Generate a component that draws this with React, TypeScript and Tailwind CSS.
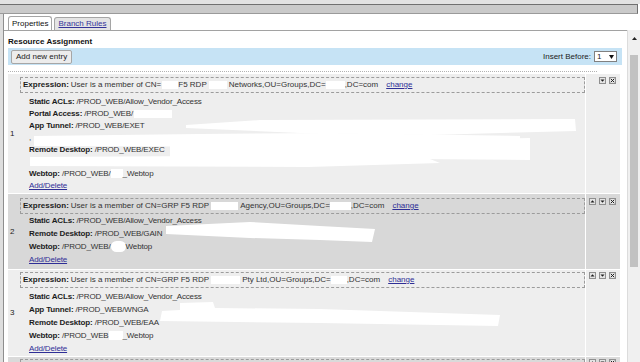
import React from "react"

type Line = { label?: string; value?: React.ReactNode; link?: string; blank?: React.ReactNode }

function Gap({ className }: { className: string }) {
  return <span className={`inline-block bg-white align-middle ${className}`} />
}

function MiniBtn({ kind }: { kind: "up" | "down" | "x" | "none" }) {
  if (kind === "none") return <span className="h-[7px] w-[7px]" />
  return (
    <span className="flex h-[7px] w-[7px] shrink-0 items-center justify-center border border-[#8f8f8f] bg-[#e4e4e4]">
      <svg width="5" height="5" viewBox="0 0 5 5">
        {kind === "up" && <path d="M0.5 3.6 L2.5 1.2 L4.5 3.6Z" fill="#1e1e1e" />}
        {kind === "down" && <path d="M0.5 1.4 L2.5 3.8 L4.5 1.4Z" fill="#1e1e1e" />}
        {kind === "x" && <path d="M0.8 0.8 L4.2 4.2 M4.2 0.8 L0.8 4.2" stroke="#1e1e1e" strokeWidth="1" />}
      </svg>
    </span>
  )
}

function Entry({
  num,
  bg,
  expr,
  lines,
  lead,
  top,
  gap,
  bottom,
  first,
  smear,
}: {
  num: string
  bg: string
  expr: React.ReactNode
  lines: Line[]
  lead: string
  top: string
  gap: string
  bottom: string
  first?: boolean
  smear?: React.ReactNode
}) {
  return (
    <div className={`relative flex shrink-0 ${bg}`}>
      <div className="flex w-[12px] items-center pl-[2px] text-[#222]">{num}</div>
      <div className={`flex-1 ${top} ${bottom}`}>
        <div className="flex h-[16px] items-center border border-dashed border-[#9c9c9c] px-[2px] text-[#333]">
          <span className="font-bold text-[#1c1c1c]">Expression:</span>
          <span className="ml-[2px]">{expr}</span>
          <a className="ml-[8px] text-[#2e2e96] underline">change</a>
        </div>
        <div className={`${gap} pl-[9px] ${lead} tracking-[-0.15px]`}>
          {lines.map((l, i) => (
            <div key={i} className="h-[1lh] whitespace-nowrap text-[#333]">
              {l.label && <span className="font-bold text-[#1c1c1c]">{l.label}: </span>}
              {l.value}
              {l.link && <a className="text-[#2e2e96] underline">{l.link}</a>}
              {l.blank}
            </div>
          ))}
        </div>
      </div>
      <div className={`flex w-[35px] gap-[3px] border-l border-white pl-[3px] ${top}`}>
        <MiniBtn kind={first ? "none" : "up"} />
        <MiniBtn kind="down" />
        <MiniBtn kind="x" />
      </div>
      {smear && (
        <svg className="pointer-events-none absolute left-0 top-0" width="612" height="120" viewBox="0 0 612 120">
          {smear}
        </svg>
      )}
    </div>
  )
}

// the next entry, only its top edge shows above the fold
function EntryEdge() {
  return (
    <div className="flex h-[8px] shrink-0 bg-[#dadada]">
      <div className="w-[12px]" />
      <div className="flex-1 pt-[2px]">
        <div className="h-full border border-b-0 border-dashed border-[#9c9c9c]" />
      </div>
      <div className="flex w-[35px] gap-[3px] overflow-hidden border-l border-white pl-[3px] pt-[2px]">
        <MiniBtn kind="up" />
        <MiniBtn kind="down" />
        <MiniBtn kind="x" />
      </div>
    </div>
  )
}

export default function App() {
  return (
    <div className="flex h-[362px] w-[640px] flex-col overflow-hidden bg-white font-['Liberation_Sans',Arial,sans-serif] text-[8px] leading-[10px]">
      <div className="h-[4px] shrink-0 bg-[#e2e2e2]" />
      <div className="mr-[2px] h-[10px] shrink-0 border-t border-r border-b border-[#707070] border-b-[#9a9a9a] bg-[#cacaca]" />
      <div className="flex min-h-0 flex-1">
        <div className="w-[4px] shrink-0 border-r border-[#8e8e8e] bg-[#dedede]" />

        <div className="flex min-w-0 flex-1 flex-col overflow-hidden">
          {/* tabs */}
          <div className="flex h-[17px] shrink-0 items-end gap-[2px] border-b border-[#a2a2a2] pl-[4px]">
            <div className="h-[14px] rounded-t-[3px] border border-b-0 border-[#a5a5a5] bg-white px-[3px] leading-[13px] text-[#111]">
              Properties
            </div>
            <div className="h-[13px] rounded-t-[3px] border border-b-0 border-[#a5a5a5] bg-[#e4e4e4] px-[3px] leading-[12px] text-[#34349a] underline">
              Branch Rules
            </div>
          </div>

          <div className="pl-[4px]">
            <div className="mt-[6px] font-bold text-[#111]">Resource Assignment</div>

            <div className="mt-[1px] mr-[5px] flex h-[17px] items-center justify-between bg-[#c6e3f5] pl-[3px] pr-[5px]">
              <div className="flex h-[14px] items-center rounded-[2px] border border-[#a6a6a6] bg-[#ececec] px-[4px] text-[#222]">
                Add new entry
              </div>
              <div className="flex items-center text-[#222]">
                Insert Before:
                <div className="ml-[3px] flex h-[11px] w-[23px] items-center justify-between border border-[#808080] bg-white px-[2px]">
                  <span>1</span>
                  <svg width="5" height="4" viewBox="0 0 5 4">
                    <path d="M0 0 L5 0 L2.5 4Z" fill="#111" />
                  </svg>
                </div>
              </div>
            </div>

            <div className="mt-[6px] mr-[30px] border-t border-dotted border-[#b3b3b3]" />

            <div className="mt-[2px] mr-[7px] flex flex-col gap-[1px]">
              <Entry
                num="1"
                first
                bg="bg-[#eeeeee]"
                top="pt-[3px]"
                gap="mt-[3px]"
                bottom="pb-[1px]"
                lead="leading-[12px]"
                expr={
                  <>
                    User is a member of CN=
                    <Gap className="ml-[1px] h-[8px] w-[16px]" />
                    F5 RDP
                    <Gap className="mx-[2px] h-[8px] w-[18px]" />
                    Networks,OU=Groups,DC=
                    <Gap className="h-[8px] w-[19px]" />
                    ,DC=com
                  </>
                }
                lines={[
                  { label: "Static ACLs", value: "/PROD_WEB/Allow_Vendor_Access" },
                  { label: "Portal Access", value: <>/PROD_WEB/<Gap className="ml-[1px] h-[8px] w-[38px]" /></> },
                  { label: "App Tunnel", value: "/PROD_WEB/EXET" },
                  { blank: <span className="text-[#444]">,</span> },
                  { label: "Remote Desktop", value: "/PROD_WEB/EXEC" },
                  { blank: "" },
                  { label: "Webtop", value: <>/PROD_WEB/<Gap className="h-[9px] w-[12px]" />_Webtop</> },
                  { link: "Add/Delete" },
                ]}
                smear={
                  <g fill="#ffffff">
                    <path d="M178 51 L252 46 L567 45 L568 57 L422 61 L292 59 L178 54Z" />
                    <path d="M26 62 L192 60 L322 59 L512 62 L512 72 L322 73 L26 72Z" />
                    <path d="M162 72 L522 64 L522 86 L162 83Z" />
                    <path d="M22 83 L412 81 L432 89 L300 93 L22 92Z" />
                  </g>
                }
              />
              <Entry
                num="2"
                bg="bg-[#d8d8d8]"
                top="pt-[4px]"
                gap="mt-0"
                bottom="pb-[3px]"
                lead="leading-[13px]"
                expr={
                  <>
                    User is a member of CN=GRP F5 RDP
                    <Gap className="mx-[2px] h-[8px] w-[27px]" />
                    Agency,OU=Groups,DC=
                    <Gap className="h-[8px] w-[21px]" />
                    ,DC=com
                  </>
                }
                lines={[
                  { label: "Static ACLs", value: "/PROD_WEB/Allow_Vendor_Access" },
                  { label: "Remote Desktop", value: "/PROD_WEB/GAIN" },
                  { label: "Webtop", value: <>/PROD_WEB/<Gap className="h-[11px] w-[15px] rounded-full" />Webtop</> },
                  { link: "Add/Delete" },
                ]}
                smear={
                  <g fill="#ffffff">
                    <path d="M158 32 L242 28 L312 32 L367 35 L364 48 L312 46 L242 44 L158 40Z" />
                  </g>
                }
              />
              <Entry
                num="3"
                bg="bg-[#eeeeee]"
                top="pt-[2px]"
                gap="mt-[2px]"
                bottom="pb-[1px]"
                lead="leading-[13px]"
                expr={
                  <>
                    User is a member of CN=GRP F5 RDP
                    <Gap className="mx-[2px] h-[8px] w-[29px]" />
                    Pty Ltd,OU=Groups,DC=
                    <Gap className="h-[8px] w-[16px]" />
                    ,DC=com
                  </>
                }
                lines={[
                  { label: "Static ACLs", value: "/PROD_WEB/Allow_Vendor_Access" },
                  { label: "App Tunnel", value: "/PROD_WEB/WNGA" },
                  { label: "Remote Desktop", value: "/PROD_WEB/EAA" },
                  { label: "Webtop", value: <>/PROD_WEB<Gap className="h-[9px] w-[14px]" />_Webtop</> },
                  { link: "Add/Delete" },
                ]}
                smear={
                  <g fill="#ffffff">
                    <path d="M172 33 L205 32 L207 38 L312 39 L492 45 L490 56 L312 53 L152 51 L154 41 L172 40Z" />
                  </g>
                }
              />
              <EntryEdge />
            </div>
          </div>
        </div>

        {/* scrollbar */}
        <div className="mt-[16px] flex w-[13px] shrink-0 flex-col items-center border-l border-[#dcdcdc] bg-[#f0f0f0]">
          <svg className="mt-[7px]" width="5" height="3" viewBox="0 0 5 3">
            <path d="M0 3 L2.5 0 L5 3Z" fill="#222" />
          </svg>
          <div className="mt-[15px] h-[212px] w-[8px] shrink-0 bg-[#c2c2c2]" />
        </div>
      </div>
    </div>
  )
}
